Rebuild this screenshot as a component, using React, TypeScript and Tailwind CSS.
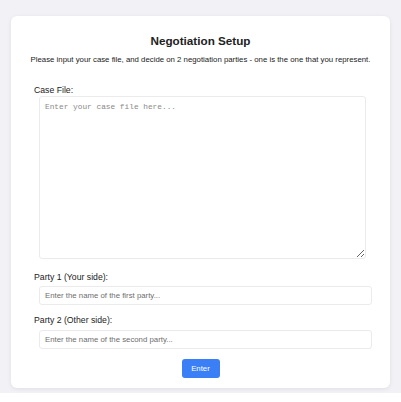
import React, { useState } from 'react';

export default function App() {
  const [caseFile, setCaseFile] = useState('');
  const [party1, setParty1] = useState('');
  const [party2, setParty2] = useState('');

  return (
    <div className="font-['Liberation_Sans',Arial,sans-serif] text-[#222]">
      <div className="bg-[#f2f2f6] px-[11px] pt-[16px] pb-[5px]">
        {/* Setup card */}
        <div className="bg-white rounded-[6px] shadow-[0_1px_4px_rgba(0,0,0,0.08)] px-[23px] pt-[18px] pb-[10px]">
          <h1 className="text-center text-[11.7px] leading-[14px] font-bold text-[#222]">Negotiation Setup</h1>
          <p className="mt-[7px] -mx-[20px] text-center text-[7.8px] leading-[10px] text-[#222] whitespace-nowrap">
            Please input your case file, and decide on 2 negotiation parties - one is the one that you represent.
          </p>

          <label className="block mt-[20px] text-[8.7px] leading-[11px] text-[#222]">Case File:</label>
          <textarea
            value={caseFile}
            onChange={(e) => setCaseFile(e.target.value)}
            placeholder="Enter your case file here..."
            className="block ml-[5px] w-[327px] h-[163px] border border-[#ebebeb] rounded-[3px] px-[5px] py-[5px] font-['Liberation_Mono',monospace] text-[7.8px] leading-[10px] placeholder:text-[#8a8a8a] outline-none"
          />

          <label className="block mt-[13px] text-[8.7px] leading-[11px] text-[#222]">Party 1 (Your side):</label>
          <input
            value={party1}
            onChange={(e) => setParty1(e.target.value)}
            placeholder="Enter the name of the first party..."
            className="block mt-[3px] ml-[5px] w-[333px] h-[19px] border border-[#ebebeb] rounded-[3px] px-[5px] text-[7.8px] placeholder:text-[#6e6e6e] outline-none"
          />

          <label className="block mt-[10px] text-[8.7px] leading-[11px] text-[#222]">Party 2 (Other side):</label>
          <input
            value={party2}
            onChange={(e) => setParty2(e.target.value)}
            placeholder="Enter the name of the second party..."
            className="block mt-[4px] ml-[5px] w-[333px] h-[19px] border border-[#ebebeb] rounded-[3px] px-[5px] text-[7.8px] placeholder:text-[#6e6e6e] outline-none"
          />

          <div className="flex justify-center mt-[10px]">
            <button className="w-[38px] h-[19px] rounded-[3px] bg-[#3b7ff6] text-white text-[7.8px]">Enter</button>
          </div>
        </div>
      </div>
    </div>
  );
}
